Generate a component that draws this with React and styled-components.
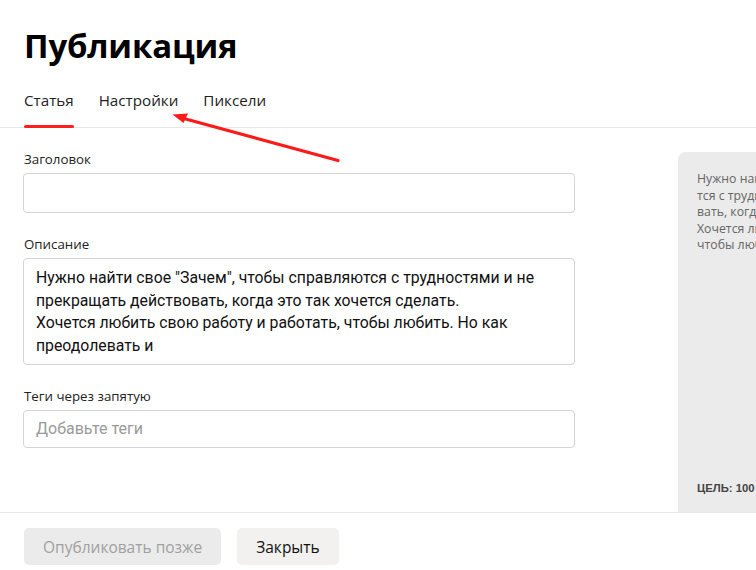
import React from 'react';
import styled, { createGlobalStyle } from 'styled-components';

const GlobalStyle = createGlobalStyle`
  html, body {
    margin: 0;
    padding: 0;
    background: #fff;
  }
  body {
    font-family: 'Open Sans', 'Noto Sans', Arial, sans-serif;
    color: #000;
    overflow: hidden;
  }
  * {
    box-sizing: border-box;
  }
`;

const Page = styled.div`
  position: relative;
  width: 756px;
  height: 570px;
  overflow: hidden;
  display: flex;
  flex-direction: column;
`;

const Header = styled.div`
  padding: 24px 24px 0;
  border-bottom: 1px solid #e6e6e6;
`;

const Title = styled.h1`
  margin: 0;
  font-size: 33px;
  line-height: 44px;
  font-weight: 700;
  letter-spacing: -0.2px;
`;

const Tabs = styled.div`
  display: flex;
  margin-top: 21px;
`;

const Tab = styled.div`
  position: relative;
  margin-right: 25px;
  padding-bottom: 16px;
  font-size: 15.2px;
  line-height: 22px;
  color: #222;

  &::after {
    content: '';
    position: absolute;
    left: 0;
    right: 0;
    bottom: -1px;
    height: 3px;
    border-radius: 2px;
    background: ${(p) => (p.active ? '#ff1f1f' : 'transparent')};
  }
`;

const Body = styled.div`
  flex: 1;
  display: flex;
  min-height: 0;
`;

const Form = styled.div`
  width: 575px;
  flex-shrink: 0;
  padding: 22px 0 0 23px;
`;

const Field = styled.div`
  margin-bottom: 22px;
`;

const Label = styled.div`
  font-size: 13.3px;
  line-height: 18px;
  color: #222;
  margin: 0 0 5px 1px;
`;

const Input = styled.div`
  height: ${(p) => p.h || 40}px;
  border: 1px solid #d4d4d4;
  border-radius: 4px;
  padding: 0 12px;
  font-family: Roboto, 'Open Sans', sans-serif;
  font-size: 16px;
  line-height: 36px;
  color: ${(p) => (p.placeholder ? '#9a9a9a' : '#000')};
`;

const Textarea = styled.div`
  height: 107px;
  border: 1px solid #d4d4d4;
  border-radius: 4px;
  padding: 8px 12px;
  font-family: Roboto, 'Open Sans', sans-serif;
  font-size: 15.8px;
  line-height: 22.5px;
  color: #111;
  white-space: nowrap;
  overflow: hidden;
`;

const Preview = styled.div`
  margin: 24px 0 0 103px;
  width: 300px;
  flex-shrink: 0;
  background: #ebebeb;
  border-radius: 8px 8px 0 0;
  padding: 19px 19px 18px;
  display: flex;
  flex-direction: column;
  justify-content: space-between;
`;

const PreviewText = styled.div`
  font-size: 12.3px;
  line-height: 16.5px;
  color: #666;
  white-space: nowrap;
`;

const Goal = styled.div`
  font-family: 'Liberation Sans', Arial, sans-serif;
  font-size: 11.3px;
  font-weight: 700;
  color: #444;
`;

const Footer = styled.div`
  border-top: 1px solid #e6e6e6;
  padding: 15px 24px 5px;
  display: flex;
  gap: 16px;
`;

const Button = styled.button`
  height: 37px;
  border: none;
  border-radius: 5px;
  padding: 0 19px;
  font-family: inherit;
  font-size: 15.5px;
  background: ${(p) => (p.disabled ? '#ebebeb' : '#f2f1ef')};
  color: ${(p) => (p.disabled ? '#a0a0a0' : '#111')};
`;

const ArrowLayer = styled.svg`
  position: absolute;
  left: 0;
  top: 0;
  pointer-events: none;
`;

export default function App() {
  return (
    <>
      <GlobalStyle />
      <Page>
        <Header>
          <Title>Публикация</Title>
          <Tabs>
            <Tab active>Статья</Tab>
            <Tab>Настройки</Tab>
            <Tab>Пиксели</Tab>
          </Tabs>
        </Header>
        <Body>
          <Form>
            <Field>
              <Label>Заголовок</Label>
              <Input />
            </Field>
            <Field>
              <Label>Описание</Label>
              <Textarea>
                Нужно найти свое "Зачем", чтобы справляются с трудностями и не
                <br />
                прекращать действовать, когда это так хочется сделать.
                <br />
                Хочется любить свою работу и работать, чтобы любить. Но как
                <br />
                преодолевать и
              </Textarea>
            </Field>
            <Field>
              <Label>Теги через запятую</Label>
              <Input h={38} placeholder="true">Добавьте теги</Input>
            </Field>
          </Form>
          <Preview>
            <PreviewText>
              Нужно найти свое "Зачем", чтобы справляю
              <br />
              тся с трудностями и не прекращать действо
              <br />
              вать, когда это так хочется сделать.
              <br />
              Хочется любить свою работу и работать,
              <br />
              чтобы любить. Но как преодолевать и
            </PreviewText>
            <Goal>ЦЕЛЬ: 100</Goal>
          </Preview>
        </Body>
        <Footer>
          <Button disabled>Опубликовать позже</Button>
          <Button>Закрыть</Button>
        </Footer>
        <ArrowLayer width="756" height="570">
          <line x1="338" y1="160.5" x2="182" y2="118" stroke="#ff1a1a" strokeWidth="3.2" strokeLinecap="round" />
          <polygon points="172.5,114.5 188,113.5 183.5,123" fill="#ff1a1a" />
        </ArrowLayer>
      </Page>
    </>
  );
}
